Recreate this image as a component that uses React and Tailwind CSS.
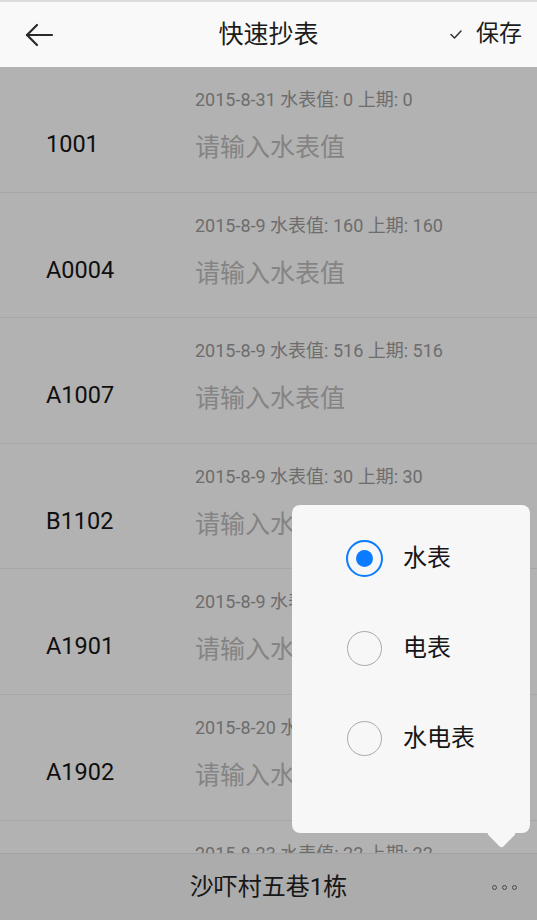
import { useState } from 'react'

const font = { fontFamily: 'Roboto, "Noto Sans CJK SC", sans-serif' }

const rows = [
  { id: '1001', meta: '2015-8-31 水表值: 0 上期: 0' },
  { id: 'A0004', meta: '2015-8-9 水表值: 160 上期: 160' },
  { id: 'A1007', meta: '2015-8-9 水表值: 516 上期: 516' },
  { id: 'B1102', meta: '2015-8-9 水表值: 30 上期: 30' },
  { id: 'A1901', meta: '2015-8-9 水表值: 30 上期: 30' },
  { id: 'A1902', meta: '2015-8-20 水表值: 12 上期: 12' },
  { id: 'A2003', meta: '2015-8-23 水表值: 22 上期: 22' },
]

const options = ['水表', '电表', '水电表']

const BackArrow = () => (
  <svg width="30" height="26" viewBox="0 0 30 26" fill="none" stroke="#2a2a2a" strokeWidth="2.2" strokeLinecap="round" strokeLinejoin="round">
    <path d="M28 13H3" />
    <path d="M13 3L3 13L13 23" />
  </svg>
)

const Check = () => (
  <svg width="12" height="9" viewBox="0 0 12 9" fill="none" stroke="#333" strokeWidth="1.5" strokeLinecap="round" strokeLinejoin="round">
    <path d="M1 4.5L4.5 8L11 1" />
  </svg>
)

const Radio = ({ checked }) =>
  checked ? (
    <div className="w-[37px] h-[37px] rounded-full border-[2.5px] border-[#0b7bff] flex items-center justify-center">
      <div className="w-[17px] h-[17px] rounded-full bg-[#0b7bff]" />
    </div>
  ) : (
    <div className="w-[35px] h-[35px] mx-px rounded-full border-[1.5px] border-[#a9a9a9]" />
  )

const MeterRow = ({ row }) => (
  <div className="h-[125.6px] shrink-0 flex items-start pt-[23px] border-b border-[#eeeeee]">
    <div className="w-[195px] pl-[46px] pt-[39px] text-[23.5px] leading-[30px] text-[#161616]">{row.id}</div>
    <div className="flex flex-col">
      <div className="text-[18px] leading-[20px] text-[#9c9c9c]">{row.meta}</div>
      <div className="mt-[22px] text-[25px] leading-[32px] text-[#bdbdbd]">请输入水表值</div>
    </div>
  </div>
)

export default function App() {
  const [type, setType] = useState(0)

  return (
    <div className="relative w-[537px] h-[920px] overflow-hidden bg-white flex flex-col" style={font}>
      <div className="h-[67px] shrink-0 grid grid-cols-[1fr_auto_1fr] items-center bg-[#f9f9f9] border-t-2 border-[#dcdcdc]">
        <div className="pl-[24px] flex items-center">
          <BackArrow />
        </div>
        <div className="text-[25px] text-[#1c1c1c]">快速抄表</div>
        <div className="flex items-center justify-end gap-[14px] pr-[15px] text-[23px] text-[#1c1c1c]">
          <Check />
          <span>保存</span>
        </div>
      </div>

      <div className="flex-1 overflow-hidden flex flex-col">
        {rows.map((row) => (
          <MeterRow key={row.id} row={row} />
        ))}
      </div>

      <div className="h-[67px] shrink-0 grid grid-cols-[1fr_auto_1fr] items-center bg-[#f6f6f6] border-t border-[#e8e8e8]">
        <div />
        <div className="text-[24px] text-[#232323]">沙吓村五巷1栋</div>
        <div className="flex justify-end items-center gap-[5px] pr-[20px]">
          <span className="w-[5px] h-[5px] rounded-full border border-[#666]" />
          <span className="w-[5px] h-[5px] rounded-full border border-[#666]" />
          <span className="w-[5px] h-[5px] rounded-full border border-[#666]" />
        </div>
      </div>

      <div className="absolute left-0 right-0 top-[67px] bottom-0 bg-black/30" />

      <div className="absolute left-[292px] top-[505px] w-[238px] h-[328px] rounded-[8px] bg-[#f7f7f7] pt-[8px]">
        <div className="absolute left-[199px] top-[318px] w-[21px] h-[21px] rotate-45 rounded-[3px] bg-[#f7f7f7]" />
        {options.map((label, i) => (
          <div key={label} onClick={() => setType(i)} className="relative h-[90px] flex items-center pl-[54px] gap-[20px] cursor-pointer">
            <Radio checked={type === i} />
            <span className="text-[24px] text-[#161616]">{label}</span>
          </div>
        ))}
      </div>
    </div>
  )
}
